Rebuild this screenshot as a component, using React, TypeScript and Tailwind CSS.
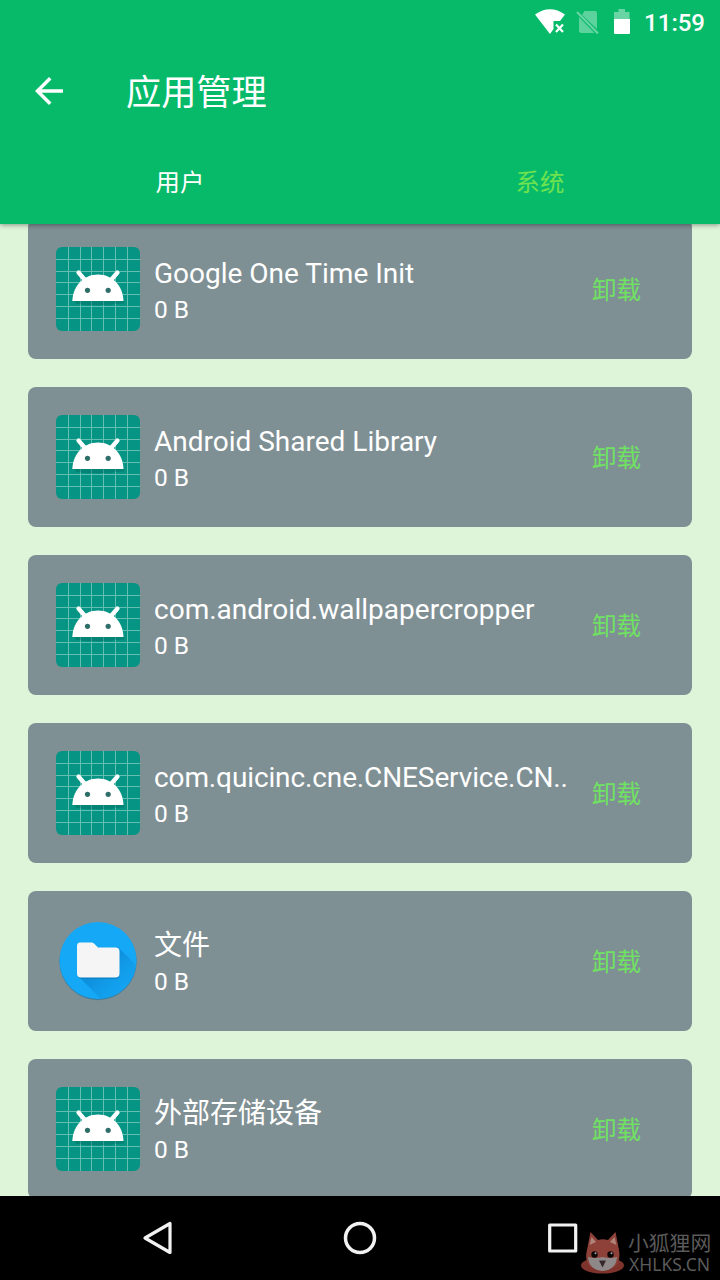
import React from 'react';

type AppInfo = {
    id: number;
    name: string;
    size: string;
    icon: 'android' | 'files';
    clipped?: boolean;
};

const apps: AppInfo[] = [
    { id: 1, name: 'Google One Time Init', size: '0 B', icon: 'android' },
    { id: 2, name: 'Android Shared Library', size: '0 B', icon: 'android' },
    { id: 3, name: 'com.android.wallpapercropper', size: '0 B', icon: 'android' },
    { id: 4, name: 'com.quicinc.cne.CNEService.CN..', size: '0 B', icon: 'android', clipped: true },
    { id: 5, name: '文件', size: '0 B', icon: 'files' },
    { id: 6, name: '外部存储设备', size: '0 B', icon: 'android' },
];

const gridLines = [12.5, 24.5, 35.5, 47.5, 59.5, 71.5];

const AndroidIcon: React.FC = () => (
    <svg viewBox="0 0 84 84" className="w-[84px] h-[84px] shrink-0">
        <rect width="84" height="84" rx="6" fill="#069584" />
        {gridLines.map(p => (
            <path key={p} d={`M${p} 0V84M0 ${p}H84`} stroke="#62bfb2" strokeWidth="1" />
        ))}
        <path d="M18 53H67L69 56Q44 60 20 57Z" fill="#04695c" opacity="0.4" />
        <path d="M22.500 25.500L29 33M61.500 25.500L55 33" stroke="#fff" strokeWidth="4.200" strokeLinecap="round" />
        <path d="M16.300 54C17 38.500 28 27.500 42 27.500S67 38.500 67.500 54Z" fill="#fff" />
        <circle cx="31.500" cy="43.300" r="2.600" fill="#2f6f69" />
        <circle cx="52.200" cy="43.300" r="2.600" fill="#2f6f69" />
    </svg>
);

const FilesIcon: React.FC = () => (
    <svg viewBox="0 0 84 84" className="w-[84px] h-[84px] shrink-0">
        <defs>
            <clipPath id="disc">
                <circle cx="42" cy="41.500" r="38.500" />
            </clipPath>
            <linearGradient id="longShadow" x1="0" y1="0" x2="1" y2="1">
                <stop offset="0.3" stopColor="#0b80cb" stopOpacity="0.6" />
                <stop offset="0.8" stopColor="#12a5f4" stopOpacity="0" />
            </linearGradient>
        </defs>
        <circle cx="42" cy="42.500" r="38.700" fill="#3f7f9f" />
        <circle cx="42" cy="41.500" r="38.500" fill="#14a8f6" />
        <path d="M22 57L62 28L100 66V100H65Z" fill="url(#longShadow)" clipPath="url(#disc)" />
        <rect x="22" y="50" width="41.500" height="10" rx="4" fill="#0a6fae" opacity="0.5" />
        <path d="M24 23.500H35.500Q37 23.500 38 24.500L42 28.500H59.500Q63.500 28.500 63.500 32.500V54.500Q63.500 58.500 59.500 58.500H25Q21 58.500 21 54.500V27Q21 23.500 24 23.500Z" fill="#f5f5f5" />
    </svg>
);

const AppCard: React.FC<{ app: AppInfo }> = ({ app }) => (
    <div className="flex items-center h-[140px] shrink-0 pl-7 pr-[51px] rounded-lg bg-[#7f9094]">
        {app.icon === 'android' ? <AndroidIcon /> : <FilesIcon />}
        <div className="ml-3.5 pt-[6px] flex-1 min-w-0 text-white whitespace-nowrap">
            <div className={`text-[28px] leading-[36px] ${app.clipped ? 'tracking-[-0.12px]' : ''}`}>{app.name}</div>
            <div className="text-[24.500px] leading-[36px]">{app.size}</div>
        </div>
        <button className="pt-1 text-[24.500px] leading-9 text-[#6fe262]">卸载</button>
    </div>
);

const StatusBar: React.FC = () => (
    <div className="flex items-center h-11 pr-[15px] justify-end text-white">
        <svg viewBox="0 0 32 28" className="w-8 h-7" fill="#fff">
            <path d="M1 6.500Q16 -4 31 6.500L26 13H19.500V21L16 26Z" />
            <path d="M22 16.500L29 24M29 16.500L22 24" stroke="#fff" strokeWidth="2.200" />
        </svg>
        <svg viewBox="0 0 24 26" className="ml-[10px] w-6 h-[26px]">
            <path d="M8.500 2H19Q21 2 21 4V20L6 6ZM3 8L18.500 24H5Q3 24 3 22Z" fill="#fff" opacity="0.35" />
            <path d="M1 3L22 24.500" stroke="#fff" strokeWidth="2" opacity="0.4" />
        </svg>
        <svg viewBox="0 0 18 26" className="ml-[13px] w-[18px] h-[26px]" fill="#fff">
            <path d="M5.500 0H12V3H16.500V10H1V3H5.500Z" opacity="0.4" />
            <path d="M1 10H17V24Q17 25 16 25H2Q1 25 1 24Z" />
        </svg>
        <span className="ml-[13px] pt-px text-[24px] font-medium leading-none">11:59</span>
    </div>
);

const Header: React.FC = () => (
    <header className="relative z-10 h-[224px] shrink-0 bg-[#06ba69] shadow-[0_1px_5px_rgba(0,0,0,0.4)]">
        <StatusBar />
        <div className="flex items-center h-[94px] pl-7 text-white">
            <svg viewBox="0 0 24 24" className="w-[42px] h-[42px]" fill="currentColor">
                <path d="M20 11H7.830l5.590-5.590L12 4l-8 8 8 8 1.410-1.410L7.830 13H20v-2z" />
            </svg>
            <h1 className="ml-14 pt-[5px] text-[35.200px] font-normal leading-none">应用管理</h1>
        </div>
        <div className="grid grid-cols-2 h-[88px] pt-0.5 text-[24.400px]">
            <button className="text-white">用户</button>
            <button className="text-[#6fe24f]">系统</button>
        </div>
    </header>
);

const Watermark: React.FC = () => (
    <div className="absolute left-[580px] top-[34px] flex items-center text-[#5a5a5a]">
        <svg viewBox="0 0 46 46" className="w-[46px] h-[46px]">
            <ellipse cx="22.500" cy="35.500" rx="21.500" ry="8" fill="#7e342c" />
            <path d="M7 20L10.500 2L18 10Q22.500 8.500 28 10L35.500 2L39 20Q41 32 34 37Q22 44 11 37Q4 31 7 20Z" fill="#8e4138" />
            <path d="M9.500 15L11.500 7L16 12ZM36.500 15L34.500 7L30 12Z" fill="#b08378" />
            <path d="M8 27Q15 29 22.500 27Q30 29 37 27Q36 40 22.500 41Q9 40 8 27Z" fill="#8e8888" />
            <circle cx="14.500" cy="24.500" r="3.200" fill="#0c0606" />
            <circle cx="30.500" cy="24.500" r="3.200" fill="#0c0606" />
            <circle cx="15.500" cy="23.200" r="1" fill="#aaa" />
            <circle cx="31.500" cy="23.200" r="1" fill="#aaa" />
            <path d="M19 30.500H26L22.500 37.500Z" fill="#35282a" />
        </svg>
        <div className="ml-[2px] whitespace-nowrap">
            <div className="text-[20.800px] leading-[22px]">小狐狸网</div>
            <div className="ml-px text-[17.500px] leading-[18px] font-['Noto_Sans']">XHLKS.CN</div>
        </div>
    </div>
);

const NavBar: React.FC = () => (
    <nav className="relative z-10 flex h-[84px] shrink-0 items-center bg-black pl-[140px]">
        <svg viewBox="0 0 36 36" className="w-9 h-9" fill="none" stroke="#f2f2f2" strokeWidth="3.200" strokeLinejoin="round">
            <path d="M5 18L30 3.500V32.500Z" />
        </svg>
        <svg viewBox="0 0 36 36" className="ml-[166px] w-9 h-9" fill="none" stroke="#f2f2f2" strokeWidth="3.500">
            <circle cx="18" cy="18" r="14.500" />
        </svg>
        <svg viewBox="0 0 36 36" className="ml-[167px] w-9 h-9" fill="none" stroke="#f2f2f2" strokeWidth="3.200" strokeLinejoin="round">
            <rect x="4.700" y="5" width="26" height="26" />
        </svg>
        <Watermark />
    </nav>
);

const App: React.FC = () => {
    return (
        <div className="flex flex-col w-[720px] h-[1280px] overflow-hidden bg-[#def5d9] font-['Roboto','Noto_Sans_CJK_SC',sans-serif]">
            <Header />
            <main className="flex-1 min-h-0 overflow-hidden">
                <div className="-mt-[5px] flex flex-col gap-7 px-7">
                    {apps.map(app => (
                        <AppCard key={app.id} app={app} />
                    ))}
                </div>
            </main>
            <NavBar />
        </div>
    );
};

export default App;
